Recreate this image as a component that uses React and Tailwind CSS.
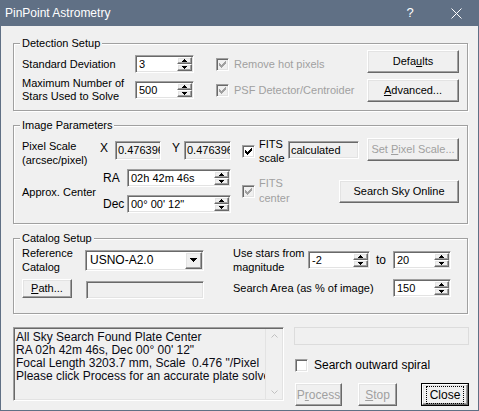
import React from "react";

const RAISED =
  "border border-t-white border-l-white border-r-[#696969] border-b-[#696969] shadow-[inset_-1px_-1px_0_#a0a0a0,inset_1px_1px_0_#e3e3e3] bg-[#f0f0f0]";
const SUNKEN =
  "border border-t-[#a0a0a0] border-l-[#a0a0a0] border-r-white border-b-white shadow-[inset_1px_1px_0_#696969,inset_-1px_-1px_0_#e3e3e3]";

function Tri({ up, big }) {
  if (big) {
    return (
      <svg width="7" height="4" viewBox="0 0 7 4" shapeRendering="crispEdges">
        <rect x="0" y="0" width="7" height="1" fill="#000" />
        <rect x="1" y="1" width="5" height="1" fill="#000" />
        <rect x="2" y="2" width="3" height="1" fill="#000" />
        <rect x="3" y="3" width="1" height="1" fill="#000" />
      </svg>
    );
  }
  return (
    <svg width="5" height="3" viewBox="0 0 5 3" shapeRendering="crispEdges">
      {up ? (
        <>
          <rect x="2" y="0" width="1" height="1" fill="#000" />
          <rect x="1" y="1" width="3" height="1" fill="#000" />
          <rect x="0" y="2" width="5" height="1" fill="#000" />
        </>
      ) : (
        <>
          <rect x="0" y="0" width="5" height="1" fill="#000" />
          <rect x="1" y="1" width="3" height="1" fill="#000" />
          <rect x="2" y="2" width="1" height="1" fill="#000" />
        </>
      )}
    </svg>
  );
}

function Btn({ children, className = "", disabled }) {
  return (
    <div
      className={`${RAISED} ${disabled ? "text-[#a0a0a0]" : "text-black"} flex items-center justify-center shrink-0 whitespace-nowrap ${className}`}
    >
      <span>{children}</span>
    </div>
  );
}

function Spin({ value, className = "" }) {
  return (
    <div className={`flex h-[18px] bg-white p-[1px] shrink-0 ${SUNKEN} ${className}`}>
      <div className="flex-1 pl-[2px] flex items-center overflow-hidden whitespace-nowrap">{value}</div>
      <div className="flex flex-col w-[15px]">
        <div className={`flex-1 flex items-center justify-center ${RAISED}`}>
          <Tri up />
        </div>
        <div className={`flex-1 flex items-center justify-center ${RAISED}`}>
          <Tri />
        </div>
      </div>
    </div>
  );
}

function Check({ checked, disabled }) {
  const c = disabled ? "#a0a0a0" : "#000";
  const cols = [2, 3, 4, 3, 2, 1, 0];
  return (
    <div
      className={`w-[13px] h-[13px] shrink-0 flex items-center justify-center ${SUNKEN} ${disabled ? "bg-[#f0f0f0]" : "bg-white"}`}
    >
      {checked && (
        <svg width="7" height="7" viewBox="0 0 7 7" shapeRendering="crispEdges">
          {cols.map((y, x) => (
            <rect key={x} x={x} y={y} width="1" height="3" fill={c} />
          ))}
        </svg>
      )}
    </div>
  );
}

function Group({ title, className = "", children }) {
  return (
    <div
      className={`relative border border-[#a0a0a0] shadow-[inset_1px_1px_0_#fff,1px_1px_0_#fff] ${className}`}
    >
      <span className="absolute -top-[8px] left-[6px] px-[2px] bg-[#f0f0f0] leading-[14px] text-black">
        {title}
      </span>
      {children}
    </div>
  );
}

const U = ({ children }) => <span className="underline underline-offset-[1px]">{children}</span>;

export default function App() {
  return (
    <div
      className="w-[479px] h-[411px] bg-[#f0f0f0] border-x border-b border-[#607085] flex flex-col text-[11px] text-black overflow-hidden"
      style={{ fontFamily: '"Liberation Sans", Arial, sans-serif' }}
    >
      {/* title bar */}
      <div className="h-[26px] shrink-0 bg-[#607085] flex items-center text-white -mx-px">
        <span className="pl-[5px] text-[12px]">PinPoint Astrometry</span>
        <div className="ml-auto flex h-full">
          <div className="w-[46px] flex items-center justify-center text-[13px]">?</div>
          <div className="w-[46px] flex items-center justify-center">
            <svg width="11" height="11" viewBox="0 0 11 11">
              <path d="M0.5 0.5L10.5 10.5M10.5 0.5L0.5 10.5" stroke="#fff" strokeWidth="1" />
            </svg>
          </div>
        </div>
      </div>

      <div className="pl-[12px] w-[467px]">
        {/* Detection Setup */}
        <Group title="Detection Setup" className="mt-[17px] h-[68px] w-[455px]">
          <div className="flex">
            <div className="pl-[8px] pt-[11px] flex flex-col gap-[8px]">
              <div className="flex items-center h-[18px]">
                <span className="w-[113px]">Standard Deviation</span>
                <Spin value="3" className="w-[59px]" />
                <div className="ml-[22px] flex items-center gap-[5px] text-[#a0a0a0]">
                  <Check checked disabled />
                  <span>Remove hot pixels</span>
                </div>
              </div>
              <div className="flex items-center h-[18px]">
                <span className="w-[113px] leading-[13px]">
                  Maximum Number of
                  <br />
                  Stars Used to Solve
                </span>
                <Spin value="500" className="w-[59px]" />
                <div className="ml-[22px] flex items-center gap-[5px] text-[#a0a0a0]">
                  <Check checked disabled />
                  <span>PSF Detector/Centroider</span>
                </div>
              </div>
            </div>
            <div className="ml-auto pr-[8px] pt-[6px] flex flex-col gap-[6px]">
              <Btn className="w-[92px] h-[23px]">
                Defa<U>u</U>lts
              </Btn>
              <Btn className="w-[92px] h-[23px]">
                <U>A</U>dvanced...
              </Btn>
            </div>
          </div>
        </Group>

        {/* Image Parameters */}
        <Group title="Image Parameters" className="mt-[14px] h-[99px] w-[455px]">
          <div className="pl-[8px] pr-[8px] pt-[12px] flex items-start h-[35px]">
            <span className="w-[78px] leading-[14px] mt-[1px]">
              Pixel Scale
              <br />
              (arcsec/pixel)
            </span>
            <span className="w-[15px] mt-[3px] leading-[14px] text-[12px]">X</span>
            <div className={`mt-[3px] w-[46px] h-[19px] bg-[#f0f0f0] ${SUNKEN} pl-[2px] flex items-center overflow-hidden whitespace-nowrap`}>
              0.476396
            </div>
            <span className="ml-[11px] w-[12px] mt-[3px] leading-[14px] text-[12px]">Y</span>
            <div className={`mt-[3px] w-[47px] h-[19px] bg-[#f0f0f0] ${SUNKEN} pl-[2px] flex items-center overflow-hidden whitespace-nowrap`}>
              0.476396
            </div>
            <div className="ml-[11px] mt-[7px]">
              <Check checked />
            </div>
            <span className="ml-[4px] w-[29px] leading-[14px] -mt-[1px]">
              FITS
              <br />
              scale
            </span>
            <div className={`mt-[3px] w-[71px] h-[18px] bg-[#f0f0f0] ${SUNKEN} pl-[2px] flex items-center`}>
              calculated
            </div>
            <Btn disabled className="ml-auto w-[92px] h-[23px]">
              Set <U>P</U>ixel Scale...
            </Btn>
          </div>
          <div className="pl-[8px] pr-[8px] mt-[8px] flex items-start">
            <span className="w-[81px] self-center mt-[2px]">Approx. Center</span>
            <div className="flex flex-col gap-[8px]">
              <div className="flex items-center">
                <span className="w-[24px] text-[12px]">RA</span>
                <Spin value="02h 42m 46s" className="w-[104px]" />
              </div>
              <div className="flex items-center">
                <span className="w-[24px] text-[12px]">Dec</span>
                <Spin value={"00\u00b0 00' 12\""} className="w-[104px]" />
              </div>
            </div>
            <div className="ml-[11px] mt-[16px]">
              <Check checked disabled />
            </div>
            <span className="ml-[4px] mt-[7px] leading-[15px] text-[#a0a0a0]">
              FITS
              <br />
              center
            </span>
            <Btn className="ml-auto mt-[11px] w-[120px] h-[23px]">Search Sky Online</Btn>
          </div>
        </Group>

        {/* Catalog Setup */}
        <Group title="Catalog Setup" className="mt-[14px] h-[76px] w-[455px]">
          <div className="pl-[8px] pt-[10px] flex items-center h-[32px]">
            <span className="w-[63px] leading-[14px]">
              Reference
              <br />
              Catalog
            </span>
            <div className={`w-[119px] h-[21px] bg-white p-[1px] flex ${SUNKEN}`}>
              <div className="flex-1 pl-[3px] flex items-center text-[12px]">USNO-A2.0</div>
              <div className={`w-[17px] flex items-center justify-center ${RAISED}`}>
                <Tri big />
              </div>
            </div>
            <span className="ml-[29px] w-[75px] leading-[14px]">
              Use stars from
              <br />
              magnitude
            </span>
            <Spin value="-2" className="w-[62px]" />
            <span className="ml-[6px] w-[17px] text-[12px]">to</span>
            <Spin value="20" className="w-[58px]" />
          </div>
          <div className="pl-[8px] mt-[7px] flex items-center h-[20px]">
            <Btn className="w-[50px] h-[19px]">
              <U>P</U>ath...
            </Btn>
            <div className={`ml-[14px] mt-[4px] w-[118px] h-[18px] bg-[#f0f0f0] ${SUNKEN}`} />
            <span className="ml-[29px] w-[160px]">Search Area (as % of image)</span>
            <Spin value="150" className="w-[58px]" />
          </div>
        </Group>

        {/* bottom */}
        <div className="mt-[13px] flex">
          <div className={`w-[271px] h-[74px] bg-[#f0f0f0] p-[1px] flex ${SUNKEN}`}>
            <div className="flex-1 pl-[1px] pt-[2px] leading-[13px] text-[12px] whitespace-pre overflow-hidden text-[#0a0a14]">
              All Sky Search Found Plate Center
              <br />
              {"RA 02h 42m 46s, Dec 00\u00b0 00' 12\""}
              <br />
              {"Focal Length 3203.7 mm, Scale  0.476 \"/Pixel"}
              <br />
              Please click Process for an accurate plate solve
            </div>
            <div className="w-[17px] shrink-0 border-l border-[#e3e3e3] bg-[#f0f0f0] flex flex-col justify-between items-center py-[5px]">
              <svg width="7" height="4" viewBox="0 0 7 4">
                <path d="M0.5 3.5L3.5 0.5L6.5 3.5" stroke="#c0c0c0" fill="none" />
              </svg>
              <svg width="7" height="4" viewBox="0 0 7 4">
                <path d="M0.5 0.5L3.5 3.5L6.5 0.5" stroke="#c0c0c0" fill="none" />
              </svg>
            </div>
          </div>
          <div className="ml-[10px] w-[175px] flex flex-col">
            <div className="h-[18px] bg-[#f0f0f0] border border-[#dcdcdc]" />
            <div className="mt-[11px] ml-[1px] flex items-center gap-[6px] text-[12px]">
              <Check />
              <span>Search outward spiral</span>
            </div>
            <div className="mt-[9px] ml-[1px] flex">
              <Btn disabled className="w-[47px] h-[23px] text-[12px]">
                P<U>r</U>ocess
              </Btn>
              <Btn disabled className="ml-[16px] w-[39px] h-[23px] text-[12px]">
                <U>S</U>top
              </Btn>
              <div className="ml-[24px] w-[48px] h-[23px] border border-black">
                <Btn className="w-full h-full text-[12px]">
                  <span className="outline outline-1 outline-dotted outline-black outline-offset-[1px] px-[2px]">Close</span>
                </Btn>
              </div>
            </div>
          </div>
        </div>
      </div>
    </div>
  );
}
